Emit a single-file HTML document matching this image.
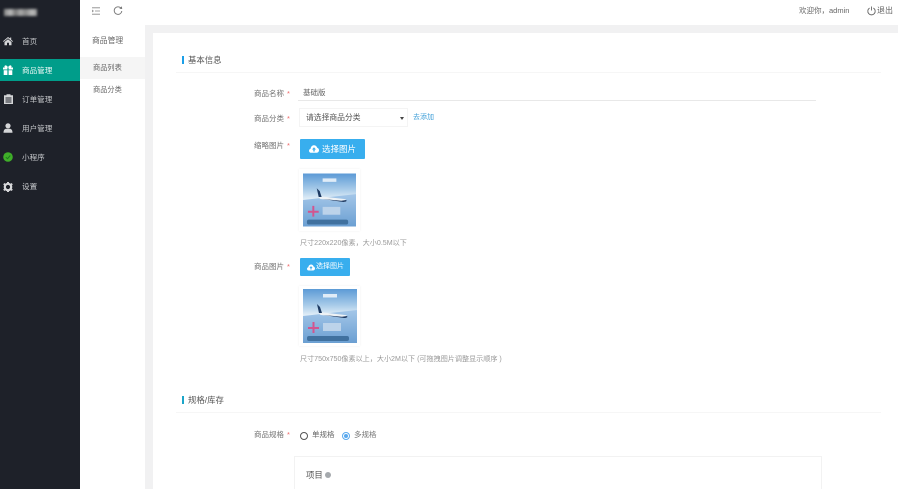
<!DOCTYPE html>
<html><head><meta charset="utf-8"><style>
html,body{margin:0;padding:0;background:#fff}
#r{position:relative;width:898px;height:489px;overflow:hidden;background:#f1f1f2;font-family:"Liberation Sans","Noto Sans CJK SC",sans-serif;color:#555;filter:blur(.3px)}
#r div,#r svg{position:absolute}
.t{white-space:nowrap;line-height:12px}
.m{font-size:7.6px;color:#c4c6c9;left:22px}
.l{font-size:7.5px;color:#707070;left:254px;width:50px}
.l i{font-style:normal;color:#e66;margin-left:3px}
.ic{fill:#d4d5d7}
</style></head><body><div id="r">
<svg width="0" height="0" style="left:0;top:0"><defs><linearGradient id="g" x1="0" y1="0" x2="0" y2="1"><stop offset="0" stop-color="#5c9ad6"/><stop offset=".3" stop-color="#a8cbe9"/><stop offset=".5" stop-color="#e6f1f9"/><stop offset="1" stop-color="#e6f1f9"/></linearGradient><linearGradient id="h" x1="0" y1="0" x2="0" y2="1"><stop offset="0" stop-color="#a3c6e8"/><stop offset="1" stop-color="#6b9fd2"/></linearGradient></defs></svg>
<div style="left:0;top:0;width:80px;height:489px;background:#1e2129"></div>
<div style="left:4px;top:9px;width:33px;height:7px;background:linear-gradient(90deg,#888,#bbb 20%,#777 35%,#aaa 50%,#888 65%,#bbb 85%,#999);filter:blur(1.2px)"></div>
<div style="left:0;top:59px;width:80px;height:22px;background:#009d8a"></div>
<svg style="left:3px;top:36px" width="10" height="10" viewBox="0 0 10 10"><path class="ic" d="M5 1 0 5.2l.6.7L5 2.3l4.400 3.600.6-.7-1.800-1.500V1.500H7.200v1zM1.500 6v3.200h2.500V6.800h2v2.400h2.500V6L5 3.200z"/></svg>
<div class="t m" style="top:36px">首页</div>
<svg style="left:3px;top:65px" width="10" height="10" viewBox="0 0 10 10"><path fill="#fff" d="M0 2.500h4.400v2H0zM5.600 2.500H10v2H5.600zM.7 5.200h3.700V10H.7zM5.600 5.200h3.700V10H5.600zM2 2.500C.8 1.500 1.700 0 3 .4c1 .3 1.700 1.200 2 2.100.3-.9 1-1.800 2-2.100 1.300-.4 2.200 1.100 1 2.100z"/></svg>
<div class="t m" style="top:65px;color:#eef9f7">商品管理</div>
<svg style="left:4px;top:94px" width="9" height="10" viewBox="0 0 9 10"><path class="ic" d="M0 1.200h2.500V.2h4v1H9V10H0zM1.500 3.500v1h6v-1zm0 2v1h6v-1zm0 2v1h6v-1z"/></svg>
<div class="t m" style="top:94px">订单管理</div>
<svg style="left:3px;top:123px" width="10" height="10" viewBox="0 0 10 10"><circle class="ic" cx="5" cy="2.800" r="2.600"/><path class="ic" d="M.5 9.800c0-3 1.500-4 2.700-4h3.600c1.200 0 2.700 1 2.700 4z"/></svg>
<div class="t m" style="top:123px">用户管理</div>
<svg style="left:3px;top:152px" width="10" height="10" viewBox="0 0 10 10"><circle cx="5" cy="5" r="4.800" fill="#3fae29"/><path d="M2.800 5.200 4.500 6.700 7.300 3.500" fill="none" stroke="#1c7a1c" stroke-width="1"/></svg>
<div class="t m" style="top:152px">小程序</div>
<svg style="left:3px;top:182px" width="10" height="10" viewBox="0 0 10 10"><circle cx="5" cy="5" r="3.200" fill="none" stroke="#d8d9db" stroke-width="2.200"/><path class="ic" d="M4 0h2v1.500H4zM4 8.500h2V10H4zM.2 2.600l1-1.600 1.300.8-1 1.600zM7.500 8.200l1-1.600 1.300.8-1 1.600zM.2 7.400l1 1.600 1.300-.8-1-1.600zM9.800 2.600 8.800 1l-1.300.8 1 1.600z"/></svg>
<div class="t m" style="top:181px">设置</div>

<div style="left:80px;top:0;width:65px;height:489px;background:#fff"></div>
<div style="left:80px;top:57px;width:65px;height:22px;background:#f5f5f5"></div>
<div class="t" style="left:92px;top:35px;font-size:7.800px;color:#666">商品管理</div>
<div class="t" style="left:93px;top:62px;font-size:7.200px;color:#666">商品列表</div>
<div class="t" style="left:93px;top:84px;font-size:7.200px;color:#666">商品分类</div>

<div style="left:80px;top:0;width:818px;height:25px;background:#fff"></div>
<svg style="left:92px;top:7px" width="9" height="8" viewBox="0 0 9 8"><path d="M0 .8h8M3 4h5M0 7.200h8" stroke="#888" stroke-width=".8" fill="none"/><path d="M0 2.500 2 4 0 5.500z" fill="#999"/></svg>
<svg style="left:113px;top:6px" width="10" height="10" viewBox="0 0 10 10"><path d="M8 2.200A3.800 3.800 0 1 0 8.800 5" fill="none" stroke="#777" stroke-width=".9"/><path d="M6.300 2.800 9.200 3 8.800 .3z" fill="#777"/></svg>
<div class="t" style="left:799px;top:5px;font-size:7.500px;color:#666;word-spacing:0">欢迎你，admin</div>
<svg style="left:867px;top:6px" width="9" height="10" viewBox="0 0 9 10"><path d="M2.600 2a3.700 3.700 0 1 0 3.800 0M4.500 .5v4" fill="none" stroke="#666" stroke-width=".9"/></svg>
<div class="t" style="left:877px;top:5px;font-size:8px;color:#666">退出</div>

<div style="left:153px;top:33px;width:745px;height:456px;background:#fff"></div>

<div style="left:182px;top:56px;width:2px;height:8px;background:#1c9fe8"></div>
<div class="t" style="left:188px;top:54px;font-size:8.400px;color:#555">基本信息</div>
<div style="left:176px;top:72px;width:705px;height:1px;background:#f6f6f6"></div>

<div class="t l" style="top:88px">商品名称<i>*</i></div>
<div class="t" style="left:303px;top:87px;font-size:7.500px;color:#666">基础版</div>
<div style="left:298px;top:100px;width:518px;height:1px;background:#e8e8e8"></div>

<div class="t l" style="top:113px">商品分类<i>*</i></div>
<div style="left:300px;top:109px;width:107px;height:17px;background:#fff;box-shadow:0 0 0 1px #f4f4f4"></div>
<div class="t" style="left:306px;top:112px;font-size:7.800px;color:#555">请选择商品分类</div>
<div style="left:400px;top:117px;width:0;height:0;border:2.500px solid transparent;border-top:3px solid #444;border-bottom:0"></div>
<div class="t" style="left:413px;top:112px;font-size:7px;color:#3f9fd8">去添加</div>

<div class="t l" style="top:140px">缩略图片<i>*</i></div>
<div style="left:300px;top:139px;width:65px;height:20px;background:#38aeee;border-radius:1px"></div>
<svg style="left:309px;top:145px" width="10" height="8" viewBox="0 0 10 8"><path fill="#fff" d="M2.300 7.800C.9 7.800 0 6.900 0 5.700c0-1 .7-1.800 1.600-2C1.900 1.600 3.300.3 5 .3c1.500 0 2.800 1 3.200 2.500 1 .3 1.800 1.200 1.800 2.400 0 1.500-1.200 2.600-2.600 2.600z"/><path fill="#38aeee" d="M5 2.300 3 4.500h1.300v2h1.400v-2H7z"/></svg>
<div class="t" style="left:322px;top:143px;font-size:8.500px;color:#fff">选择图片</div>

<div style="left:299px;top:169px;width:61px;height:62px;background:#fff;box-shadow:0 0 2px #eee"></div>
<svg style="left:303px;top:173px" width="53" height="54" viewBox="0 0 54 54"><rect width="54" height="54" fill="url(#g)"/><path d="M0 27 54 21V54H0z" fill="url(#h)"/><path d="M16 23 42 26c3 .5 3 3 0 3L18 26c-2-.5-2-3-2-3z" fill="#eef2f5"/><path d="M14 15l3 3 2 6-3 0z" fill="#1d3a63"/><path d="M20 26 41 29c3 0 4-1 3-2l-5 .8z" fill="#1d3a63"/><rect x="20" y="5" width="14" height="3.500" fill="#f2f7fb" opacity=".85"/><path d="M5 39h11M10.500 33v11" stroke="#d2558f" stroke-width="2"/><rect x="20" y="34" width="18" height="8" fill="#bcd3ea"/><rect x="4" y="47" width="42" height="5" rx="2" fill="#40719f"/></svg>
<div class="t" style="left:300px;top:237px;font-size:7.100px;color:#999">尺寸220x220像素，大小0.5M以下</div>

<div class="t l" style="top:261px">商品图片<i>*</i></div>
<div style="left:300px;top:258px;width:50px;height:18px;background:#38aeee;border-radius:1px"></div>
<svg style="left:307px;top:264px" width="8" height="7" viewBox="0 0 10 8"><path fill="#fff" d="M2.300 7.800C.9 7.800 0 6.900 0 5.700c0-1 .7-1.800 1.600-2C1.900 1.600 3.300.3 5 .3c1.500 0 2.800 1 3.200 2.500 1 .3 1.800 1.200 1.800 2.400 0 1.500-1.200 2.600-2.600 2.600z"/><path fill="#38aeee" d="M5 2.300 3 4.500h1.300v2h1.400v-2H7z"/></svg>
<div class="t" style="left:316px;top:261px;font-size:7px;color:#fff">选择图片</div>

<div style="left:299px;top:286px;width:61px;height:60px;background:#fff;box-shadow:0 0 2px #eee"></div>
<svg style="left:303px;top:289px" width="54" height="54" viewBox="0 0 54 54"><rect width="54" height="54" fill="url(#g)"/><path d="M0 27 54 21V54H0z" fill="url(#h)"/><path d="M16 23 42 26c3 .5 3 3 0 3L18 26c-2-.5-2-3-2-3z" fill="#eef2f5"/><path d="M14 15l3 3 2 6-3 0z" fill="#1d3a63"/><path d="M20 26 41 29c3 0 4-1 3-2l-5 .8z" fill="#1d3a63"/><rect x="20" y="5" width="14" height="3.500" fill="#f2f7fb" opacity=".85"/><path d="M5 39h11M10.500 33v11" stroke="#d2558f" stroke-width="2"/><rect x="20" y="34" width="18" height="8" fill="#bcd3ea"/><rect x="4" y="47" width="42" height="5" rx="2" fill="#40719f"/></svg>
<div class="t" style="left:300px;top:353px;font-size:7.100px;color:#999">尺寸750x750像素以上，大小2M以下 (可拖拽图片调整显示顺序 )</div>

<div style="left:182px;top:396px;width:2px;height:8px;background:#1ba5c9"></div>
<div class="t" style="left:188px;top:394px;font-size:8.400px;color:#555">规格/库存</div>
<div style="left:176px;top:412px;width:705px;height:1px;background:#f6f6f6"></div>

<div class="t l" style="top:429px">商品规格<i>*</i></div>
<div style="left:300px;top:432px;width:6px;height:6px;border:1px solid #555;border-radius:50%"></div>
<div class="t" style="left:312px;top:429px;font-size:7.500px;color:#666">单规格</div>
<div style="left:342px;top:432px;width:6px;height:6px;border:1px solid #5aa9ee;border-radius:50%"></div>
<div style="left:344px;top:434px;width:4px;height:4px;background:#5aa9ee;border-radius:50%"></div>
<div class="t" style="left:354px;top:429px;font-size:7.500px;color:#777">多规格</div>

<div style="left:294px;top:456px;width:528px;height:40px;background:#fff;border:1px solid #f2f2f2;box-sizing:border-box"></div>
<div class="t" style="left:306px;top:469px;font-size:8.400px;color:#555">项目</div>
<div style="left:325px;top:472px;width:6px;height:6px;background:#a5a9ad;border-radius:50%"></div>
</div></body></html>
